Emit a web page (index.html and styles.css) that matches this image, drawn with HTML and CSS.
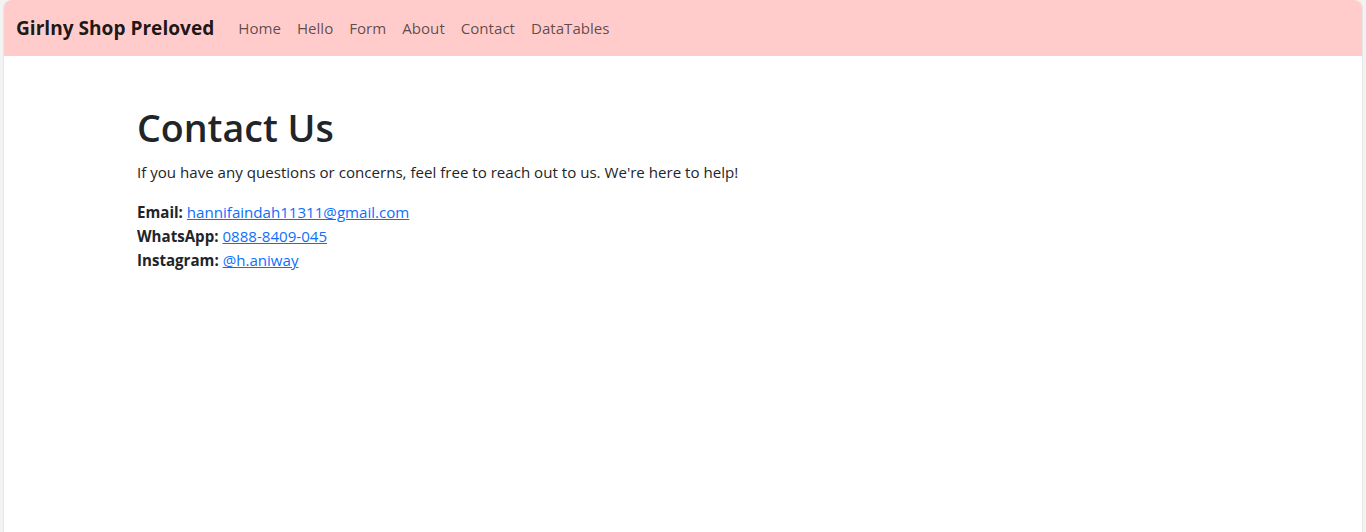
FILE: index.html
```html
<!DOCTYPE html>
<html lang="en">
<head>
<meta charset="utf-8">
<title>Contact Us - Girlny Shop Preloved</title>
<link rel="stylesheet" href="styles.css">
</head>
<body>
<div class="frame">
  <nav class="navbar">
    <a class="brand" href="#">Girlny Shop Preloved</a>
    <ul class="nav">
      <li><a class="nav-link" href="#">Home</a></li>
      <li><a class="nav-link" href="#">Hello</a></li>
      <li><a class="nav-link" href="#">Form</a></li>
      <li><a class="nav-link" href="#">About</a></li>
      <li><a class="nav-link" href="#">Contact</a></li>
      <li><a class="nav-link" href="#">DataTables</a></li>
    </ul>
  </nav>
  <main class="container">
    <h1 class="title">Contact Us</h1>
    <p class="lead-text">If you have any questions or concerns, feel free to reach out to us. We're here to help!</p>
    <ul class="contact-list">
      <li><strong>Email:</strong> <a href="#">hannifaindah11311@gmail.com</a></li>
      <li><strong>WhatsApp:</strong> <a href="#">0888-8409-045</a></li>
      <li><strong>Instagram:</strong> <a href="#">@h.aniway</a></li>
    </ul>
  </main>
</div>
</body>
</html>
```
FILE: styles.css
```css
html, body {
  margin: 0;
  padding: 0;
  height: 100%;
}
body {
  background: #f3f3f3;
  font-family: "Open Sans", "Noto Sans", sans-serif;
  font-size: 15.1px;
  line-height: 24px;
  color: #212529;
  overflow: hidden;
}
.frame {
  margin: 0 4px;
  height: 100%;
  background: #fff;
  border-radius: 8px 8px 0 0;
  overflow: hidden;
  box-shadow: -1px 0 0 #e6e6e6, 1px 0 0 #e6e6e6;
}
.navbar {
  display: flex;
  align-items: center;
  height: 56px;
  box-sizing: border-box;
  padding: 8px 12px;
  background: #ffcccb;
}
.brand {
  font-size: 19.1px;
  font-weight: 700;
  line-height: 30px;
  padding: 5px 0;
  margin-right: 16px;
  color: rgba(0, 0, 0, 0.9);
  text-decoration: none;
  white-space: nowrap;
}
.nav {
  display: flex;
  list-style: none;
  margin: 0;
  padding: 0;
}
.nav-link {
  display: block;
  padding: 8px;
  color: rgba(0, 0, 0, 0.65);
  text-decoration: none;
}
.container {
  max-width: 1092px;
  margin: 48px auto 0;
}
.title {
  margin: 0 0 8px;
  font-size: 37.6px;
  font-weight: 600;
  line-height: 48px;
  color: #212529;
}
.lead-text {
  margin: 0 0 16px;
}
.contact-list {
  list-style: none;
  margin: 0;
  padding: 0;
}
.contact-list strong {
  font-weight: 700;
}
.contact-list a {
  color: #0d6efd;
  text-decoration: underline;
}
```
